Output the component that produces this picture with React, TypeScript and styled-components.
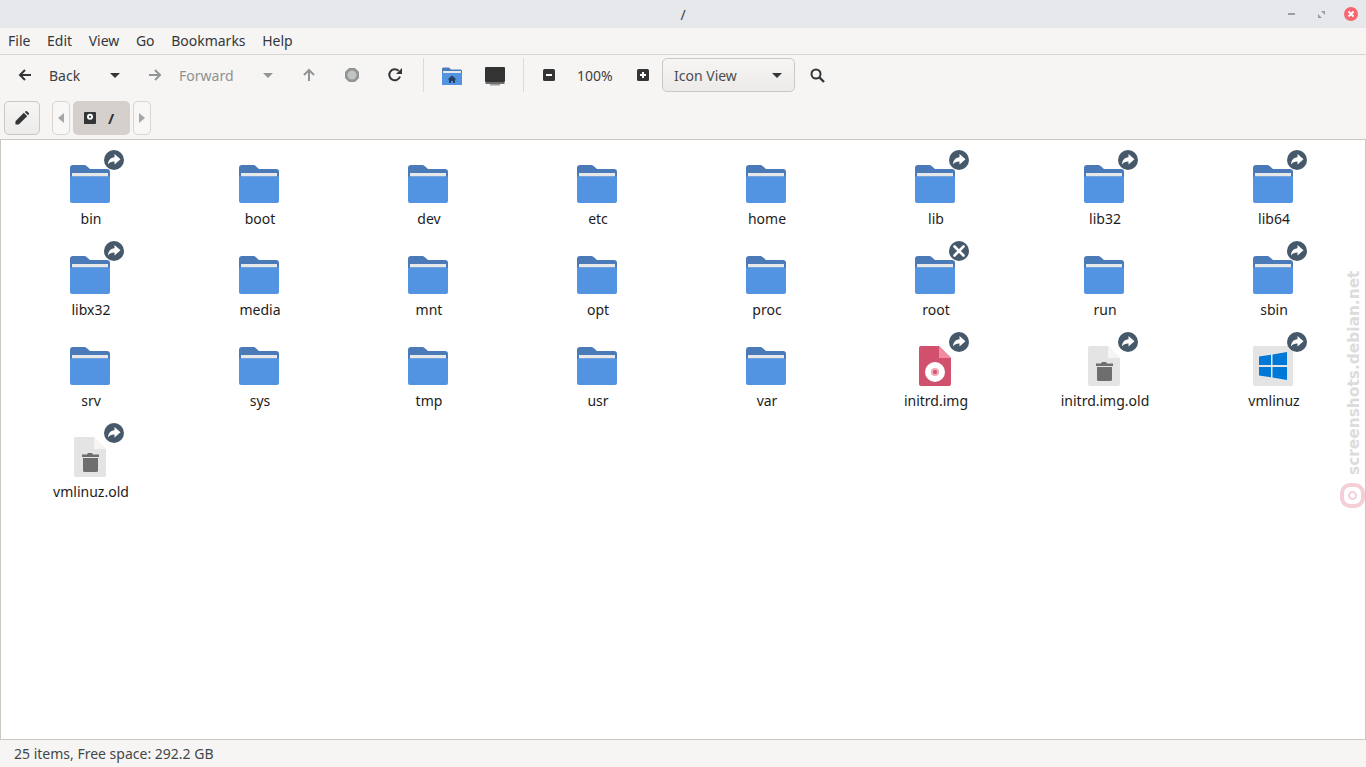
import React from "react";
import styled, { createGlobalStyle } from "styled-components";

const Global = createGlobalStyle`
  html, body { margin: 0; padding: 0; height: 100%; overflow: hidden; background: #f6f5f4; }
  #root { height: 100%; }
  * { box-sizing: border-box; }
`;

const FONT = `"Noto Sans", "Open Sans", sans-serif`;

const Window = styled.div`
  position: relative;
  display: flex;
  flex-direction: column;
  height: 767px;
  width: 1366px;
  font-family: ${FONT};
  font-size: 14px;
  color: #3d3f42;
  background: #f6f5f4;
  overflow: hidden;
`;

const TitleBar = styled.header`
  position: relative;
  flex: 0 0 28px;
  display: flex;
  align-items: center;
  justify-content: center;
  background: #e6e8ec;
  color: #3a3d42;
`;

const WindowControls = styled.div`
  position: absolute;
  right: 0;
  top: 0;
  height: 28px;
  display: flex;
  align-items: center;
`;

const WinButton = styled.span<{ $w: number }>`
  width: ${(p) => p.$w}px;
  height: 28px;
  display: flex;
  align-items: center;
  justify-content: center;
`;

const MenuBar = styled.nav`
  flex: 0 0 27px;
  display: flex;
  align-items: center;
  padding-left: 8px;
  gap: 16.6px;
  border-bottom: 1px solid #d8d4d0;
`;

const MenuItem = styled.span`
  line-height: 20px;
  color: #33373a;
`;

const ToolBar = styled.div`
  flex: 0 0 42px;
  display: flex;
  align-items: center;
  padding: 0 0 2px 6px;
`;

const Slot = styled.span<{ $w: number; $drop?: number }>`
  flex: 0 0 ${(p) => p.$w}px;
  width: ${(p) => p.$w}px;
  height: 34px;
  padding-top: ${(p) => p.$drop ?? 0}px;
  display: flex;
  align-items: center;
  justify-content: center;
`;

const ToolLabel = styled.span<{ $w: number; $pad?: number; $off?: boolean }>`
  flex: 0 0 ${(p) => p.$w}px;
  width: ${(p) => p.$w}px;
  padding-left: ${(p) => p.$pad ?? 0}px;
  color: ${(p) => (p.$off ? "#8f9192" : "#3d3f42")};
  white-space: nowrap;
`;

const Separator = styled.span`
  flex: 0 0 1px;
  width: 1px;
  height: 34px;
  background: #dedbd7;
`;

const ViewCombo = styled.div`
  flex: 0 0 133px;
  height: 34px;
  margin-left: 1px;
  display: flex;
  align-items: center;
  justify-content: space-between;
  padding: 0 12px 0 11px;
  border: 1px solid #cdc7c2;
  border-radius: 5px;
  background: linear-gradient(#f6f5f4, #edebe9);
  color: #4a4d50;
`;

const PathBar = styled.div`
  flex: 0 0 43px;
  display: flex;
  align-items: flex-start;
  padding: 4px 0 0 4px;
  border-bottom: 1px solid #cdc7c2;
`;

const EditButton = styled.span`
  width: 36px;
  height: 34px;
  display: flex;
  align-items: center;
  justify-content: center;
  border: 1px solid #cdc7c2;
  border-radius: 5px;
  background: linear-gradient(#f6f5f4, #edebe9);
  margin-right: 12px;
`;

const ArrowButton = styled.span`
  width: 18px;
  height: 34px;
  display: flex;
  align-items: center;
  justify-content: center;
  border: 1px solid #d8d4d0;
  border-radius: 5px;
  background: #f8f7f6;
`;

const Crumb = styled.span`
  width: 57px;
  height: 34px;
  margin: 0 3px;
  display: flex;
  align-items: center;
  gap: 12px;
  padding-left: 11px;
  border-radius: 5px;
  background: #d5d0cb;
  color: #2e3033;
  font-weight: 700;
  font-size: 15px;
`;

const Files = styled.main`
  flex: 1;
  display: grid;
  grid-template-columns: repeat(8, 169px);
  grid-auto-rows: 91px;
  align-content: start;
  padding: 10px 0 0 5px;
  background: #ffffff;
  border-left: 1px solid #cdc7c2;
  border-right: 1px solid #cdc7c2;
`;

const Cell = styled.div`
  display: flex;
  flex-direction: column;
  align-items: center;
`;

const IconBox = styled.div`
  position: relative;
  width: 48px;
  height: 48px;
  margin-top: 10px;
`;

const EmblemBox = styled.span`
  position: absolute;
  left: 37px;
  top: -10px;
  width: 20px;
  height: 20px;
  display: block;
  line-height: 0;
`;

const FileLabel = styled.div`
  margin-top: 1px;
  padding-left: 1px;
  line-height: 20px;
  color: #1c1c1c;
  white-space: nowrap;
`;

const StatusBar = styled.footer`
  flex: 0 0 28px;
  display: flex;
  align-items: center;
  padding-left: 14px;
  border-top: 1px solid #cdc7c2;
  color: #44474a;
`;

const Watermark = styled.div`
  position: absolute;
  left: 1343px;
  top: 270px;
  height: 205px;
  width: 22px;
  writing-mode: vertical-rl;
  transform: rotate(180deg);
  text-align: left;
  line-height: 22px;
  font-family: "DejaVu Sans", sans-serif;
  font-weight: 700;
  font-size: 15.4px;
  color: #dcdcdc;
  white-space: nowrap;
`;

const WatermarkLogo = styled.svg`
  position: absolute;
  left: 1340px;
  top: 483px;
`;

const Folder = () => (
  <svg width="48" height="48" viewBox="0 0 48 48">
    <path d="M3 8a3 3 0 0 1 3-3h11c1.5 0 2.2.6 3.2 1.6L23 9h17a3 3 0 0 1 3 3v10H3z" fill="#4a7ab8" />
    <rect x="5" y="13" width="36" height="3.500" fill="#e6e8ea" />
    <path d="M3 16.500h40V41a2 2 0 0 1-2 2H5a2 2 0 0 1-2-2z" fill="#5294e2" />
  </svg>
);

const DiscFile = () => (
  <svg width="48" height="48" viewBox="0 0 48 48">
    <path d="M9 4h18l12 12v26a2 2 0 0 1-2 2H9a2 2 0 0 1-2-2V6a2 2 0 0 1 2-2z" fill="#d1506e" />
    <path d="M27 4l12 12H27z" fill="#f08ba0" />
    <circle cx="23" cy="30" r="10" fill="#fff" />
    <circle cx="23" cy="30" r="4" fill="#f0a8b8" />
    <circle cx="23" cy="30" r="2" fill="#d1506e" />
  </svg>
);

const TrashFile = () => (
  <svg width="48" height="48" viewBox="0 0 48 48">
    <path d="M9 4h18l12 12v26a2 2 0 0 1-2 2H9a2 2 0 0 1-2-2V6a2 2 0 0 1 2-2z" fill="#e4e4e4" />
    <path d="M27 4l12 12H27z" fill="#f5f5f5" />
    <path d="M20 21.500l1-1.500h4l1 1.500h6v2.500H15v-2.500z" fill="#6e6e6e" />
    <path d="M16 25h15v12.500a1.500 1.500 0 0 1-1.500 1.500h-12a1.500 1.500 0 0 1-1.500-1.500z" fill="#6e6e6e" />
  </svg>
);

const WinFile = () => (
  <svg width="48" height="48" viewBox="0 0 48 48">
    <rect x="3" y="4" width="40" height="40" rx="2" fill="#e4e4e4" />
    <path d="M9 14.500l12-1.700V23H9zM22.500 12.500L37 10v13H22.500zM9 25h12v10.200l-12-1.700zM22.500 25H37v13l-14.500-2.500z" fill="#0078d7" />
  </svg>
);

const LinkEmblem = () => (
  <svg width="20" height="20" viewBox="0 0 20 20">
    <circle cx="10" cy="10" r="10" fill="#46596a" />
    <path d="M10.500 4l6 5.300-6 5.300v-3c-2.800-.1-4.700.7-6.500 2.900.1-4.200 2.400-7 6.500-7.300z" fill="#fff" />
  </svg>
);

const LockEmblem = () => (
  <svg width="20" height="20" viewBox="0 0 20 20">
    <circle cx="10" cy="10" r="10" fill="#46596a" />
    <path d="M5.500 5.500l9 9M14.500 5.500l-9 9" stroke="#fff" strokeWidth="2.600" strokeLinecap="round" />
  </svg>
);

const Arrow = ({ dir, color }: { dir: "l" | "r" | "u"; color: string }) => {
  const rot = dir === "l" ? 0 : dir === "r" ? 180 : 90;
  return (
    <svg width="14" height="14" viewBox="0 0 14 14" style={{ transform: `rotate(${rot}deg)` }}>
      <path d="M13 7H2.500M7 2L2 7l5 5" fill="none" stroke={color} strokeWidth="2" />
    </svg>
  );
};

const Caret = ({ color }: { color: string }) => (
  <svg width="10" height="5" viewBox="0 0 10 5">
    <path d="M0 0h10L5 5z" fill={color} />
  </svg>
);

const StopIcon = () => (
  <svg width="16" height="16" viewBox="0 0 16 16">
    <path d="M5 1h6l4 4v6l-4 4H5l-4-4V5z" fill="#929595" />
    <circle cx="8" cy="8" r="4.500" fill="#c2c3c3" />
  </svg>
);

const ReloadIcon = () => (
  <svg width="16" height="16" viewBox="0 0 16 16">
    <path d="M13 9.500A5.500 5.500 0 1 1 11.600 3.800" fill="none" stroke="#333537" strokeWidth="2" />
    <path d="M15 1v6H9z" fill="#333537" />
  </svg>
);

const HomeFolder = () => (
  <svg width="22" height="20" viewBox="0 0 22 20">
    <path d="M1 3a1.500 1.500 0 0 1 1.500-1.500H8L10 3.500h9.500A1.500 1.500 0 0 1 21 5v5H1z" fill="#4a7ab8" />
    <rect x="2" y="5" width="18" height="2" fill="#e6e8ea" />
    <path d="M1 7h20v12H1z" fill="#5294e2" />
    <path d="M11 9.500l4.500 4H14v3.500h-2v-2h-2v2H8v-3.500H6.500z" fill="#26415f" />
  </svg>
);

const MonitorIcon = () => (
  <svg width="20" height="19" viewBox="0 0 20 19">
    <rect x="0" y="0" width="20" height="15" rx="1" fill="#333333" />
    <rect x="0.500" y="15" width="19" height="2" fill="#6d6d6d" />
    <rect x="5" y="17" width="10" height="1.500" fill="#a0a0a0" />
  </svg>
);

const ZoomIcon = ({ plus }: { plus?: boolean }) => (
  <svg width="12" height="12" viewBox="0 0 12 12">
    <rect width="12" height="12" rx="1.500" fill="#333537" />
    <path d={plus ? "M3 6h6M6 3v6" : "M3 6h6"} stroke="#fff" strokeWidth="2" />
  </svg>
);

const SearchIcon = () => (
  <svg width="15" height="15" viewBox="0 0 15 15">
    <circle cx="6" cy="6" r="4.500" fill="none" stroke="#333537" strokeWidth="2" />
    <path d="M9.500 9.500L14 14" stroke="#333537" strokeWidth="2.400" />
  </svg>
);

const PencilIcon = () => (
  <svg width="14" height="14" viewBox="0 0 15 15">
    <path d="M0.500 14.500V11L9.500 2l3.500 3.500-9 9zM10.500 1l1-.800a1 1 0 0 1 1.300 0l2 2a1 1 0 0 1 0 1.300l-.800 1z" fill="#333537" />
  </svg>
);

const DiskIcon = () => (
  <svg width="12" height="12" viewBox="0 0 12 12">
    <path d="M1 0h10a1 1 0 0 1 1 1v10a1 1 0 0 1-1 1H0V1a1 1 0 0 1 1-1z" fill="#333537" />
    <circle cx="6" cy="4.800" r="3" fill="#fff" />
    <circle cx="6" cy="4.800" r="1.100" fill="#333537" />
  </svg>
);

const Triangle = ({ left }: { left?: boolean }) => (
  <svg width="6" height="10" viewBox="0 0 6 10">
    <path d={left ? "M6 0v10L0 5z" : "M0 0v10l6-5z"} fill="#a5a8a9" />
  </svg>
);

type Kind = "folder" | "disc" | "trash" | "win";
type Emblem = "link" | "lock" | undefined;
interface Item { name: string; kind: Kind; emblem?: Emblem }

const items: Item[] = [
  { name: "bin", kind: "folder", emblem: "link" },
  { name: "boot", kind: "folder" },
  { name: "dev", kind: "folder" },
  { name: "etc", kind: "folder" },
  { name: "home", kind: "folder" },
  { name: "lib", kind: "folder", emblem: "link" },
  { name: "lib32", kind: "folder", emblem: "link" },
  { name: "lib64", kind: "folder", emblem: "link" },
  { name: "libx32", kind: "folder", emblem: "link" },
  { name: "media", kind: "folder" },
  { name: "mnt", kind: "folder" },
  { name: "opt", kind: "folder" },
  { name: "proc", kind: "folder" },
  { name: "root", kind: "folder", emblem: "lock" },
  { name: "run", kind: "folder" },
  { name: "sbin", kind: "folder", emblem: "link" },
  { name: "srv", kind: "folder" },
  { name: "sys", kind: "folder" },
  { name: "tmp", kind: "folder" },
  { name: "usr", kind: "folder" },
  { name: "var", kind: "folder" },
  { name: "initrd.img", kind: "disc", emblem: "link" },
  { name: "initrd.img.old", kind: "trash", emblem: "link" },
  { name: "vmlinuz", kind: "win", emblem: "link" },
  { name: "vmlinuz.old", kind: "trash", emblem: "link" },
];

const icons: Record<Kind, React.FC> = { folder: Folder, disc: DiscFile, trash: TrashFile, win: WinFile };

export default function App() {
  return (
    <Window>
      <Global />
      <TitleBar>
        /
        <WindowControls>
          <WinButton $w={29}>
            <svg width="7" height="2" viewBox="0 0 7 2"><rect width="7" height="2" fill="#9a9ca6" /></svg>
          </WinButton>
          <WinButton $w={30}>
            <svg width="7" height="7" viewBox="0 0 7 7">
              <path d="M3 0h4v4zM0 3l4 4H0z" fill="#9a9ca6" />
            </svg>
          </WinButton>
          <WinButton $w={30}>
            <svg width="14" height="14" viewBox="0 0 14 14">
              <circle cx="7" cy="7" r="7" fill="#f7656f" />
              <path d="M4.500 4.500l5 5M9.500 4.500l-5 5" stroke="#fff" strokeWidth="1.800" />
            </svg>
          </WinButton>
        </WindowControls>
      </TitleBar>
      <MenuBar>
        {["File", "Edit", "View", "Go", "Bookmarks", "Help"].map((m) => (
          <MenuItem key={m}>{m}</MenuItem>
        ))}
      </MenuBar>
      <ToolBar>
        <Slot $w={38}><Arrow dir="l" color="#333537" /></Slot>
        <ToolLabel $w={56} $pad={5}>Back</ToolLabel>
        <Slot $w={30}><Caret color="#333537" /></Slot>
        <Slot $w={49}><Arrow dir="r" color="#929595" /></Slot>
        <ToolLabel $w={72} $off>Forward</ToolLabel>
        <Slot $w={33}><Caret color="#929595" /></Slot>
        <Slot $w={50}><Arrow dir="u" color="#929595" /></Slot>
        <Slot $w={36}><StopIcon /></Slot>
        <Slot $w={50}><ReloadIcon /></Slot>
        <Slot $w={3} />
        <Separator />
        <Slot $w={56} $drop={2}><HomeFolder /></Slot>
        <Slot $w={30} $drop={2}><MonitorIcon /></Slot>
        <Slot $w={13} />
        <Separator />
        <Slot $w={50}><ZoomIcon /></Slot>
        <ToolLabel $w={51} $pad={3}>100%</ToolLabel>
        <Slot $w={36}><ZoomIcon plus /></Slot>
        <ViewCombo>
          Icon View
          <Caret color="#333537" />
        </ViewCombo>
        <Slot $w={44}><SearchIcon /></Slot>
      </ToolBar>
      <PathBar>
        <EditButton><PencilIcon /></EditButton>
        <ArrowButton><Triangle left /></ArrowButton>
        <Crumb><DiskIcon />/</Crumb>
        <ArrowButton><Triangle /></ArrowButton>
      </PathBar>
      <Files>
        {items.map((it) => {
          const Icon = icons[it.kind];
          return (
            <Cell key={it.name}>
              <IconBox>
                <Icon />
                {it.emblem && (
                  <EmblemBox>{it.emblem === "link" ? <LinkEmblem /> : <LockEmblem />}</EmblemBox>
                )}
              </IconBox>
              <FileLabel>{it.name}</FileLabel>
            </Cell>
          );
        })}
      </Files>
      <StatusBar>25 items, Free space: 292.2 GB</StatusBar>
      <Watermark>screenshots.debian.net</Watermark>
      <WatermarkLogo width="25" height="25" viewBox="0 0 25 25">
        <rect x="2" y="2" width="21" height="21" rx="8" fill="none" stroke="#f4cfd8" strokeWidth="4" />
        <circle cx="12.500" cy="12.500" r="3.500" fill="none" stroke="#f4cfd8" strokeWidth="2" />
      </WatermarkLogo>
    </Window>
  );
}
